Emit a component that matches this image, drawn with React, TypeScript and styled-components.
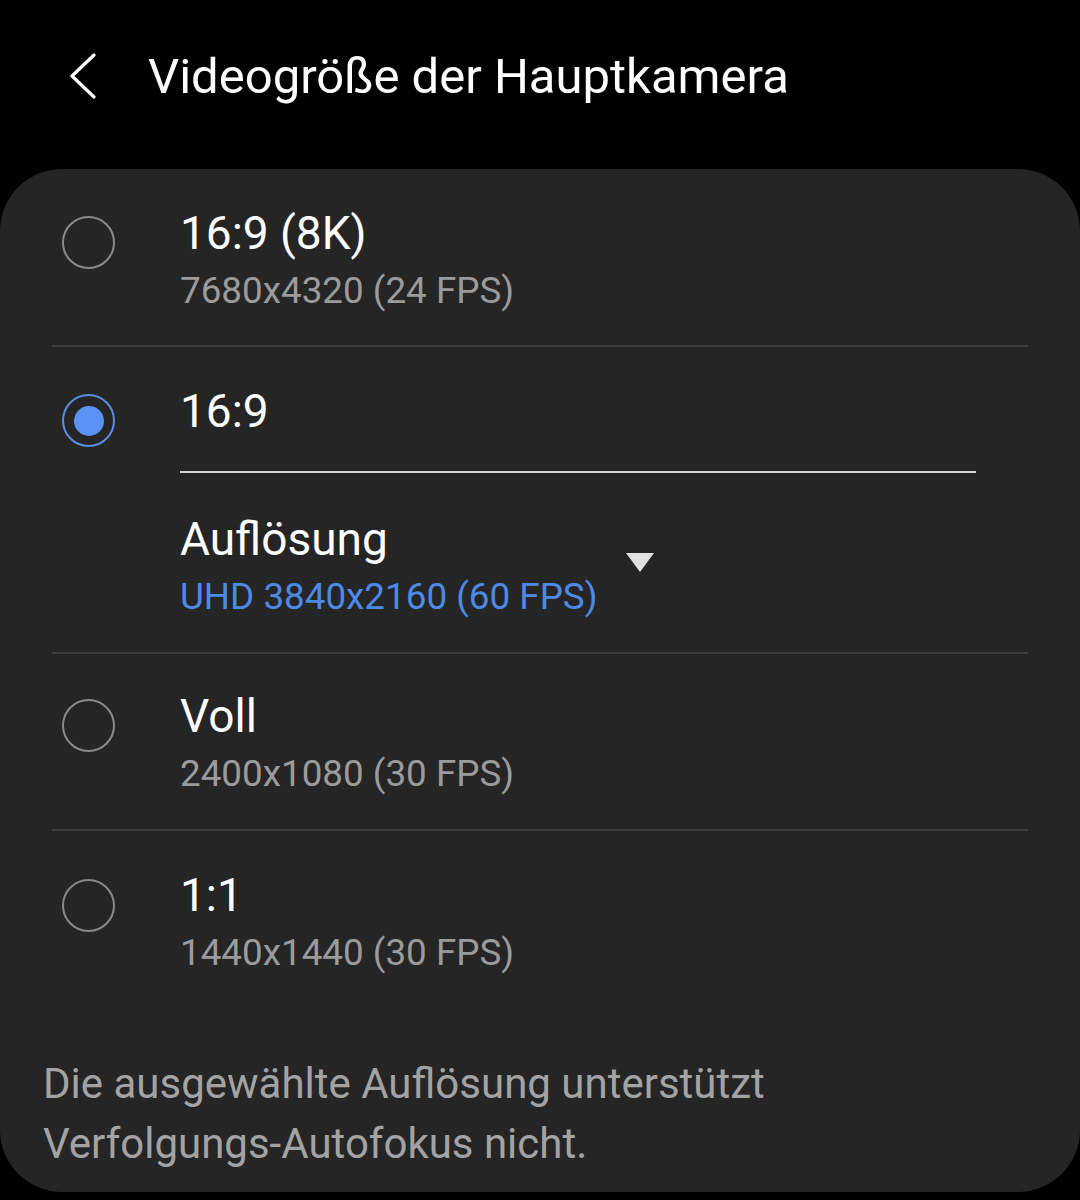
import React from 'react';
import styled, { createGlobalStyle } from 'styled-components';

const GlobalStyle = createGlobalStyle`
  html, body {
    margin: 0;
    padding: 0;
    background: #000;
  }
  body {
    font-family: Roboto, "Noto Sans", sans-serif;
    -webkit-font-smoothing: antialiased;
  }
`;

const Screen = styled.div`
  width: 1080px;
  height: 1200px;
  background: #000;
  display: flex;
  flex-direction: column;
  overflow: hidden;
`;

const Header = styled.header`
  height: 169px;
  display: flex;
  align-items: flex-start;
  padding-top: 50px;
  box-sizing: border-box;
`;

const BackButton = styled.button`
  background: none;
  border: none;
  padding: 0;
  margin-left: 66px;
  width: 34px;
  height: 52px;
  display: flex;
  align-items: center;
  justify-content: center;
  cursor: pointer;
`;

const Title = styled.h1`
  margin: 0 0 0 48px;
  font-family: Roboto, sans-serif;
  font-weight: 400;
  font-size: 49px;
  line-height: 54px;
  color: #fff;
`;

const Card = styled.main`
  flex: 1;
  margin-bottom: 8px;
  background: #252525;
  border-radius: 62px;
  display: flex;
  flex-direction: column;
`;

const Option = styled.div<{ $height: number; $last?: boolean }>`
  height: ${p => p.$height}px;
  display: flex;
  align-items: flex-start;
  box-sizing: border-box;
  margin: 0 52px;
  border-bottom: 2px solid ${p => (p.$last ? 'transparent' : '#3d3d3d')};
`;

const RadioSlot = styled.div<{ $top: number }>`
  width: 74px;
  padding-left: 10px;
  padding-top: ${p => p.$top}px;
  flex-shrink: 0;
`;

const Radio = styled.span<{ $checked?: boolean }>`
  display: flex;
  align-items: center;
  justify-content: center;
  width: 53px;
  height: 53px;
  box-sizing: border-box;
  border-radius: 50%;
  border: 2.5px solid ${p => (p.$checked ? '#5b8ee6' : '#8a8a8a')};

  &::after {
    content: '';
    display: ${p => (p.$checked ? 'block' : 'none')};
    width: 30px;
    height: 30px;
    border-radius: 50%;
    background: #5b92f6;
  }
`;

const Texts = styled.div<{ $top: number }>`
  padding-top: ${p => p.$top}px;
  padding-left: 44px;
  display: flex;
  flex-direction: column;
  flex: 1;
`;

const Label = styled.div`
  font-size: 46px;
  line-height: 52px;
  color: #fff;
`;

const Sub = styled.div<{ $accent?: boolean }>`
  font-size: 36.8px;
  line-height: 40px;
  margin-top: 12px;
  color: ${p => (p.$accent ? '#4d8ae6' : '#9b9b9b')};
`;

const InnerDivider = styled.div`
  height: 2px;
  background: #d6d6d6;
  width: 796px;
  margin-top: 34px;
`;

const Dropdown = styled.div`
  display: flex;
  align-items: flex-start;
  margin-top: 40px;
`;

const DropTexts = styled.div`
  display: flex;
  flex-direction: column;
`;

const Caret = styled.span`
  width: 0;
  height: 0;
  margin: 40px 0 0 28px;
  border-left: 14px solid transparent;
  border-right: 14px solid transparent;
  border-top: 19px solid #e2e2e2;
`;

const Note = styled.p`
  margin: 53px 0 0 43px;
  font-size: 42px;
  line-height: 60px;
  color: #a3a3a3;
`;

export default function App() {
  return (
    <>
      <GlobalStyle />
      <Screen>
        <Header>
          <BackButton aria-label="Zurück">
            <svg width="30" height="46" viewBox="0 0 30 46" fill="none">
              <path d="M26 2 L4 23 L26 44" stroke="#fff" strokeWidth="3.2" strokeLinecap="round" strokeLinejoin="round" />
            </svg>
          </BackButton>
          <Title>Videogröße der Hauptkamera</Title>
        </Header>

        <Card>
          <Option $height={178}>
            <RadioSlot $top={47}>
              <Radio />
            </RadioSlot>
            <Texts $top={38}>
              <Label>16:9 (8K)</Label>
              <Sub>7680x4320 (24 FPS)</Sub>
            </Texts>
          </Option>

          <Option $height={307}>
            <RadioSlot $top={47}>
              <Radio $checked />
            </RadioSlot>
            <Texts $top={38}>
              <Label>16:9</Label>
              <InnerDivider />
              <Dropdown>
                <DropTexts>
                  <Label>Auflösung</Label>
                  <Sub $accent>UHD 3840x2160 (60 FPS)</Sub>
                </DropTexts>
                <Caret />
              </Dropdown>
            </Texts>
          </Option>

          <Option $height={177}>
            <RadioSlot $top={45}>
              <Radio />
            </RadioSlot>
            <Texts $top={36}>
              <Label>Voll</Label>
              <Sub>2400x1080 (30 FPS)</Sub>
            </Texts>
          </Option>

          <Option $height={170} $last>
            <RadioSlot $top={48}>
              <Radio />
            </RadioSlot>
            <Texts $top={38}>
              <Label>1:1</Label>
              <Sub>1440x1440 (30 FPS)</Sub>
            </Texts>
          </Option>

          <Note>
            Die ausgewählte Auflösung unterstützt
            <br />
            Verfolgungs-Autofokus nicht.
          </Note>
        </Card>
      </Screen>
    </>
  );
}
